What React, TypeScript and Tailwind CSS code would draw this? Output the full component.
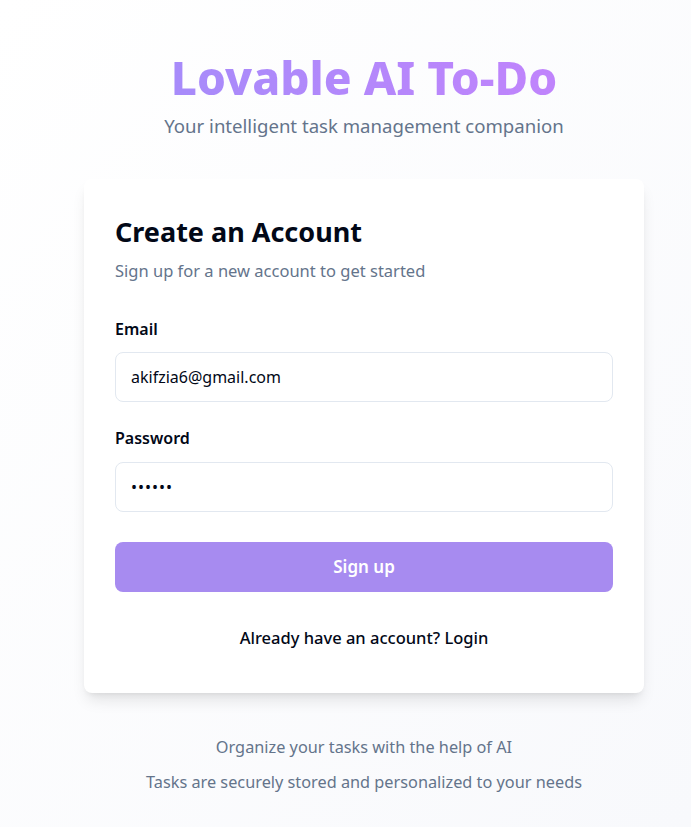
export default function App() {
  return (
    <div
      className="min-h-screen w-full overflow-hidden bg-gradient-to-br from-[#ffffff] to-[#f8f9fc]"
      style={{ fontFamily: '"Noto Sans", "Open Sans", sans-serif' }}
    >
      <div className="w-[728px] flex flex-col items-center pt-[48px]">
        {/* Header */}
        <h1 className="text-[46px] leading-[58px] font-extrabold bg-gradient-to-r from-[#a78bfa] to-[#c084fc] bg-clip-text text-transparent">
          Lovable AI To-Do
        </h1>
        <p className="mt-[6px] text-[18.6px] leading-[28px] text-[#64748b]">
          Your intelligent task management companion
        </p>

        {/* Card */}
        <div className="mt-[39px] w-[560px] rounded-lg bg-white shadow-lg px-[31px] pt-[34px] pb-[43px]">
          <h2 className="text-[27px] leading-[38px] font-bold text-[#020817]">Create an Account</h2>
          <p className="mt-[8px] text-[16.5px] leading-[24px] text-[#64748b]">
            Sign up for a new account to get started
          </p>

          <div className="mt-[34px] flex flex-col">
            <label className="text-[16px] leading-[24px] font-semibold text-[#020817]">Email</label>
            <div className="mt-[11px] h-[50px] rounded-lg border border-[#e2e8f0] flex items-center px-[15px] text-[16px] text-[#020817]">
              akifzia6@gmail.com
            </div>
          </div>

          <div className="mt-[24px] flex flex-col">
            <label className="text-[16px] leading-[24px] font-semibold text-[#020817]">Password</label>
            <div className="mt-[12px] h-[50px] rounded-lg border border-[#e2e8f0] flex items-center px-[15px] text-[16px] tracking-[1px] text-[#020817]">
              ••••••
            </div>
          </div>

          <button className="mt-[30px] w-full h-[50px] rounded-lg bg-[#a78bf0] text-white text-[17px] font-semibold">
            Sign up
          </button>

          <p className="mt-[34px] text-center text-[16.5px] leading-[24px] font-medium text-[#020817]">
            Already have an account? Login
          </p>
        </div>

        {/* Footer */}
        <div className="mt-[42px] flex flex-col items-center gap-[11px] text-[16.3px] leading-[24px] text-[#64748b]">
          <p>Organize your tasks with the help of AI</p>
          <p>Tasks are securely stored and personalized to your needs</p>
        </div>
      </div>
    </div>
  );
}
